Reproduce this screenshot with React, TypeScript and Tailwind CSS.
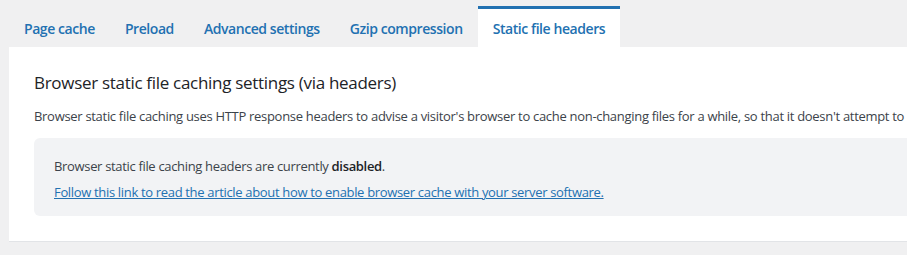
const tabs = ['Page cache', 'Preload', 'Advanced settings', 'Gzip compression', 'Static file headers'];

export default function App() {
  const active = 'Static file headers';
  return (
    <div className="w-[907px] h-[255px] overflow-hidden bg-[#f0f0f1] text-[#3c434a]" style={{ fontFamily: '"Open Sans", sans-serif' }}>
      {/* Tabs */}
      <div className="flex items-end h-[47px] pl-[9px]">
        {tabs.map((t) => (
          <div
            key={t}
            className={
              t === active
                ? 'h-[41px] px-[15px] flex items-center bg-white border-t-[3px] border-[#2271b1] text-[14px] font-semibold text-[#2271b1] tracking-[-0.43px]'
                : 'h-[41px] px-[15px] pt-[3px] flex items-center text-[14px] font-semibold text-[#2271b1] tracking-[-0.43px]'
            }
          >
            {t}
          </div>
        ))}
      </div>

      {/* Panel */}
      <div className="ml-[9px] bg-white h-[195px] border-b border-[#e2e4e7] pl-[25px] pt-[23px] overflow-hidden">
        <h2 className="text-[17px] font-medium text-[#1d2327] leading-[26px] tracking-[-0.3px] whitespace-nowrap">
          Browser static file caching settings (via headers)
        </h2>
        <p className="mt-[11px] text-[13px] leading-[18px] whitespace-nowrap tracking-[-0.3px]">
          Browser static file caching uses HTTP response headers to advise a visitor's browser to cache non-changing files for a while, so that it doesn't attempt to
        </p>
        <div className="mt-[13px] bg-[#f2f3f5] rounded-l-[6px] h-[78px] pl-[20px] pt-[19px] text-[13px] leading-[18px] tracking-[-0.33px] whitespace-nowrap">
          <p>
            Browser static file caching headers are currently <strong className="font-semibold text-[#1d2327]">disabled</strong>.
          </p>
          <a href="#" className="block mt-[8px] text-[#2271b1] underline">
            Follow this link to read the article about how to enable browser cache with your server software.
          </a>
        </div>
      </div>
    </div>
  );
}
